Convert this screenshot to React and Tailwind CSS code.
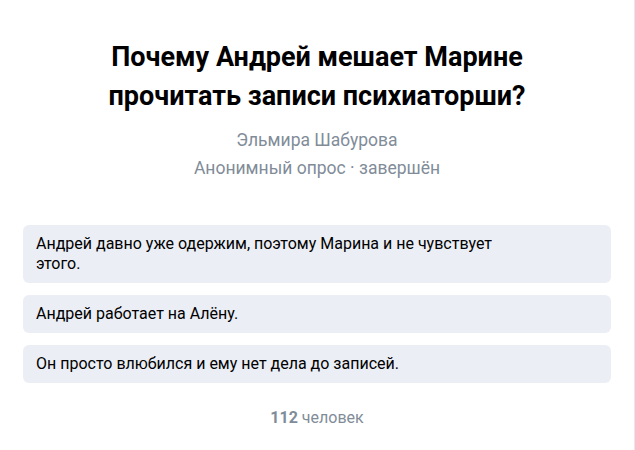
export default function App() {
  const options = [
    "Андрей давно уже одержим, поэтому Марина и не чувствует этого.",
    "Андрей работает на Алёну.",
    "Он просто влюбился и ему нет дела до записей.",
  ];

  return (
    <div
      className="w-[635px] h-[450px] overflow-hidden bg-white"
      style={{ fontFamily: "Roboto, 'Noto Sans', sans-serif" }}
    >
      <div className="w-[635px] h-[450px] bg-white border-r border-[#e7e8ec] flex flex-col">
        <div className="pt-[38px] flex flex-col items-center">
          <h1 className="w-[460px] text-center text-[27px] leading-[39px] font-bold text-black">
            Почему Андрей мешает Марине прочитать записи психиаторши?
          </h1>
          <div className="mt-[10px] text-center text-[17.5px] leading-[28px] text-[#818c99]">
            <div>Эльмира Шабурова</div>
            <div>Анонимный опрос · завершён</div>
          </div>
        </div>

        <div className="mt-[43px] px-[23px] flex flex-col gap-[12px]">
          {options.map((text) => (
            <div
              key={text}
              className="rounded-[6px] bg-[#ebeef5] pl-[13px] pr-[80px] py-[9px] text-[16px] leading-[20px] text-black"
            >
              {text}
            </div>
          ))}
        </div>

        <div className="mt-[25px] text-center text-[16px] leading-[20px] text-[#818c99]">
          <span className="font-bold">112</span> человек
        </div>
      </div>
    </div>
  );
}
